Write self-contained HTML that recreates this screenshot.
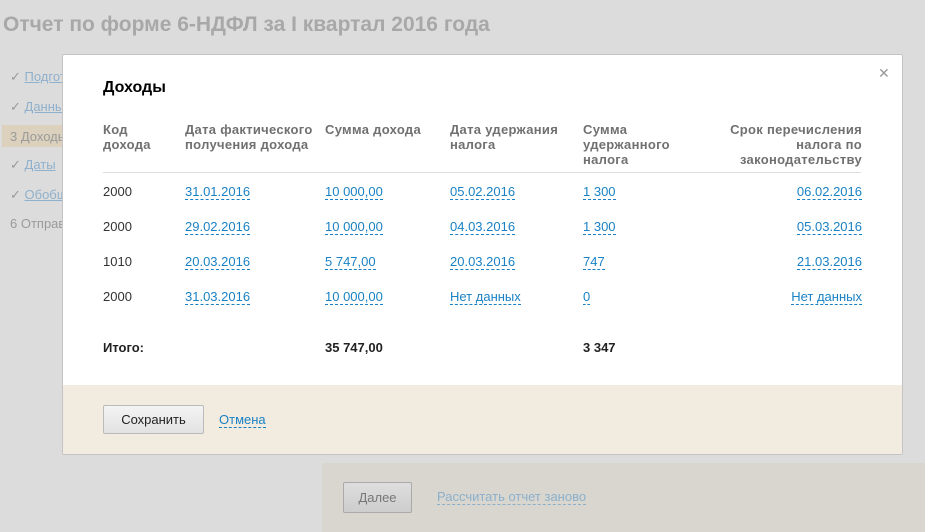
<!DOCTYPE html>
<html><head><meta charset="utf-8"><style>
body{margin:0;width:925px;height:532px;background:#dcdcdc;font-family:"Liberation Sans",Arial,sans-serif;position:relative;overflow:hidden}
.a{position:absolute;white-space:nowrap}
.t{font-size:21px;font-weight:bold;color:#a8a8a8;left:3px;top:13px}
.side{font-size:13px;color:#9a9a9a}
.side u{color:#8fb0cc}
.modal{position:absolute;left:62px;top:54px;width:839px;height:399px;background:#fff;border:1px solid #c4c4c4;border-radius:2px}
.foot{position:absolute;left:0;right:0;bottom:0;height:69px;background:#f2ebe0}
.h{font-size:13px;font-weight:bold;color:#707070;line-height:15px;letter-spacing:0.3px}
.c{font-size:13px;color:#333;line-height:16px}
.l{font-size:13px;color:#1a82c4;border-bottom:1px dashed #1a82c4;line-height:15px}
.b{font-size:13px;font-weight:bold;color:#222}
</style></head><body>
<div class="a t">Отчет по форме 6-НДФЛ за I квартал 2016 года</div>
<div class="a side" style="left:10px;top:69px">✓ <u>Подготовка</u></div>
<div class="a side" style="left:10px;top:99px">✓ <u>Данные</u></div>
<div class="a" style="left:2px;top:125px;width:70px;height:22px;background:#dcd1bd"></div>
<div class="a side" style="left:10px;top:129px">3 Доходы</div>
<div class="a side" style="left:10px;top:157px">✓ <u>Даты</u></div>
<div class="a side" style="left:10px;top:187px">✓ <u>Обобщ</u></div>
<div class="a side" style="left:10px;top:216px">6 Отправка</div>
<div class="a" style="left:322px;top:463px;width:603px;height:69px;background:#d9d6d0"></div>
<div class="a" style="left:343px;top:482px;width:67px;height:29px;border:1px solid #aaa;border-radius:2px;background:linear-gradient(#dedede,#cdcdcd);font-size:13px;color:#777;text-align:center;line-height:29px">Далее</div>
<div class="a" style="left:437px;top:489px;font-size:13px;color:#8ab0cc;border-bottom:1px dashed #8ab0cc;line-height:15px">Рассчитать отчет заново</div>

<div class="modal">
<div class="a" style="left:815px;top:10px;font-size:14px;color:#999">✕</div>
<div class="a" style="left:40px;top:24px;font-size:16px;font-weight:bold;color:#000">Доходы</div>
<div class="a h" style="left:40px;top:67px">Код<br>дохода</div>
<div class="a h" style="left:122px;top:67px">Дата фактического<br>получения дохода</div>
<div class="a h" style="left:262px;top:67px">Сумма дохода</div>
<div class="a h" style="left:387px;top:67px">Дата удержания<br>налога</div>
<div class="a h" style="left:520px;top:67px">Сумма<br>удержанного<br>налога</div>
<div class="a h" style="right:40px;top:67px;text-align:right">Срок перечисления<br>налога по<br>законодательству</div>
<div class="a" style="left:40px;top:117px;width:758px;height:1px;background:#ddd"></div>

<div class="a c" style="left:40px;top:129px">2000</div>
<div class="a l" style="left:122px;top:129px">31.01.2016</div>
<div class="a l" style="left:262px;top:129px">10 000,00</div>
<div class="a l" style="left:387px;top:129px">05.02.2016</div>
<div class="a l" style="left:520px;top:129px">1 300</div>
<div class="a l" style="right:40px;top:129px">06.02.2016</div>

<div class="a c" style="left:40px;top:164px">2000</div>
<div class="a l" style="left:122px;top:164px">29.02.2016</div>
<div class="a l" style="left:262px;top:164px">10 000,00</div>
<div class="a l" style="left:387px;top:164px">04.03.2016</div>
<div class="a l" style="left:520px;top:164px">1 300</div>
<div class="a l" style="right:40px;top:164px">05.03.2016</div>

<div class="a c" style="left:40px;top:199px">1010</div>
<div class="a l" style="left:122px;top:199px">20.03.2016</div>
<div class="a l" style="left:262px;top:199px">5 747,00</div>
<div class="a l" style="left:387px;top:199px">20.03.2016</div>
<div class="a l" style="left:520px;top:199px">747</div>
<div class="a l" style="right:40px;top:199px">21.03.2016</div>

<div class="a c" style="left:40px;top:234px">2000</div>
<div class="a l" style="left:122px;top:234px">31.03.2016</div>
<div class="a l" style="left:262px;top:234px">10 000,00</div>
<div class="a l" style="left:387px;top:234px">Нет данных</div>
<div class="a l" style="left:520px;top:234px">0</div>
<div class="a l" style="right:40px;top:234px">Нет данных</div>

<div class="a b" style="left:40px;top:285px">Итого:</div>
<div class="a b" style="left:262px;top:285px">35 747,00</div>
<div class="a b" style="left:520px;top:285px">3 347</div>

<div class="foot">
<div class="a" style="left:40px;top:20px;width:99px;height:27px;border:1px solid #bbb;border-radius:2px;background:linear-gradient(#f4f4f4,#e2e2e2);font-size:13px;color:#222;text-align:center;line-height:27px">Сохранить</div>
<div class="a l" style="left:156px;top:27px">Отмена</div>
</div>
</div>
</body></html>
